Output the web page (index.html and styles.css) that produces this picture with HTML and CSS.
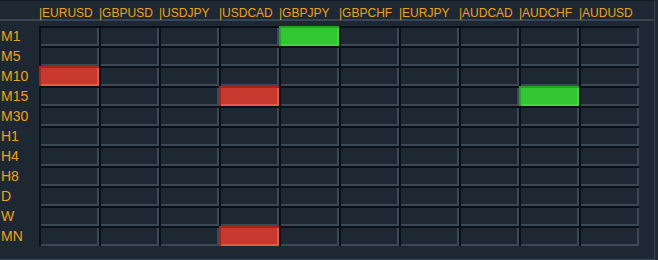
FILE: index.html
```html
<!DOCTYPE html>
<html>
<head>
<meta charset="utf-8">
<link rel="stylesheet" href="styles.css">
</head>
<body>
<div class="panel">
  <div class="header">
    <span></span>
    <span class="sym">|EURUSD</span><span class="sym">|GBPUSD</span><span class="sym">|USDJPY</span><span class="sym">|USDCAD</span><span class="sym">|GBPJPY</span><span class="sym">|GBPCHF</span><span class="sym">|EURJPY</span><span class="sym">|AUDCAD</span><span class="sym">|AUDCHF</span><span class="sym">|AUDUSD</span>
  </div>
  <div class="grid">
    <div class="tf">M1</div><div class="c"></div><div class="c"></div><div class="c"></div><div class="c"></div><div class="c up"></div><div class="c"></div><div class="c"></div><div class="c"></div><div class="c"></div><div class="c"></div>
    <div class="tf">M5</div><div class="c"></div><div class="c"></div><div class="c"></div><div class="c"></div><div class="c"></div><div class="c"></div><div class="c"></div><div class="c"></div><div class="c"></div><div class="c"></div>
    <div class="tf">M10</div><div class="c dn"></div><div class="c"></div><div class="c"></div><div class="c"></div><div class="c"></div><div class="c"></div><div class="c"></div><div class="c"></div><div class="c"></div><div class="c"></div>
    <div class="tf">M15</div><div class="c"></div><div class="c"></div><div class="c"></div><div class="c dn"></div><div class="c"></div><div class="c"></div><div class="c"></div><div class="c"></div><div class="c up"></div><div class="c"></div>
    <div class="tf">M30</div><div class="c"></div><div class="c"></div><div class="c"></div><div class="c"></div><div class="c"></div><div class="c"></div><div class="c"></div><div class="c"></div><div class="c"></div><div class="c"></div>
    <div class="tf">H1</div><div class="c"></div><div class="c"></div><div class="c"></div><div class="c"></div><div class="c"></div><div class="c"></div><div class="c"></div><div class="c"></div><div class="c"></div><div class="c"></div>
    <div class="tf">H4</div><div class="c"></div><div class="c"></div><div class="c"></div><div class="c"></div><div class="c"></div><div class="c"></div><div class="c"></div><div class="c"></div><div class="c"></div><div class="c"></div>
    <div class="tf">H8</div><div class="c"></div><div class="c"></div><div class="c"></div><div class="c"></div><div class="c"></div><div class="c"></div><div class="c"></div><div class="c"></div><div class="c"></div><div class="c"></div>
    <div class="tf">D</div><div class="c"></div><div class="c"></div><div class="c"></div><div class="c"></div><div class="c"></div><div class="c"></div><div class="c"></div><div class="c"></div><div class="c"></div><div class="c"></div>
    <div class="tf">W</div><div class="c"></div><div class="c"></div><div class="c"></div><div class="c"></div><div class="c"></div><div class="c"></div><div class="c"></div><div class="c"></div><div class="c"></div><div class="c"></div>
    <div class="tf">MN</div><div class="c"></div><div class="c"></div><div class="c"></div><div class="c dn"></div><div class="c"></div><div class="c"></div><div class="c"></div><div class="c"></div><div class="c"></div><div class="c"></div>
  </div>
</div>
</body>
</html>
```

FILE: styles.css
```css
html, body {
  margin: 0;
  padding: 0;
  background: #1e2833;
}
body {
  width: 658px;
  height: 260px;
  overflow: hidden;
  font-family: "Liberation Sans", Arial, sans-serif;
  color: #f0a21c;
}
.panel {
  box-sizing: border-box;
  width: 655px;
  height: 260px;
  border-top: 1px solid #121921;
  border-right: 1px solid #3a4654;
  border-bottom: 1px solid #3a4654;
  background: #1e2833;
}
.header {
  display: grid;
  grid-template-columns: 39px repeat(10, 60px);
  height: 18px;
  border-bottom: 2px solid #3a4654;
  align-items: end;
}
.sym {
  font-size: 12px;
  line-height: 14px;
  white-space: nowrap;
  position: relative;
  top: 1px;
}
.grid {
  display: grid;
  grid-template-columns: 39px repeat(10, 60px);
  grid-auto-rows: 20px;
  margin-top: 5px;
}
.tf {
  font-size: 14px;
  line-height: 20px;
  padding-left: 1px;
}
.c {
  box-sizing: border-box;
  border-top: 2px solid #0a0f17;
  border-left: 2px solid #0a0f17;
  background: #1e2833;
  box-shadow: inset -2px -2px 0 #3c4855;
}
.c.dn {
  border-color: #a8241a;
  background: #c7392e;
  box-shadow: inset -2px -2px 0 #e35a4c;
}
.c.up {
  border-color: #22a422;
  background: #33c633;
  box-shadow: inset -2px -2px 0 #44d444;
}
```
